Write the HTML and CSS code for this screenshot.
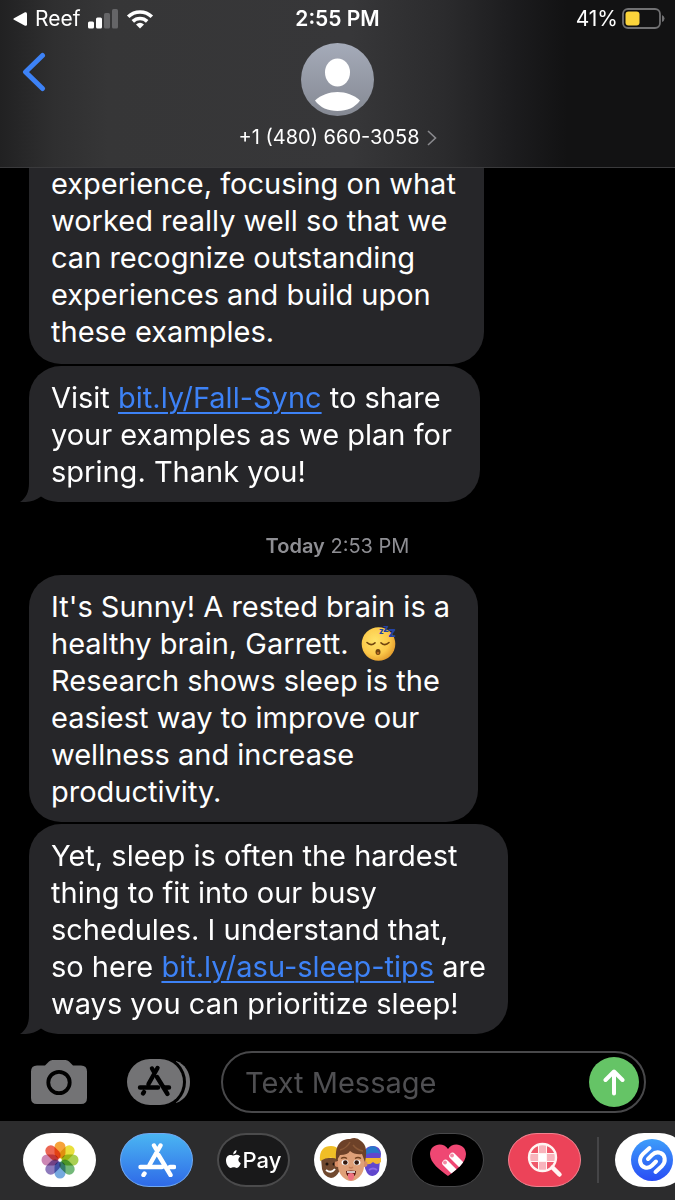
FILE: index.html
```html
<!DOCTYPE html>
<html lang="en">
<head>
<meta charset="utf-8">
<meta name="viewport" content="width=device-width, initial-scale=1">
<title>Messages</title>
<link rel="stylesheet" href="styles.css">
</head>
<body>
<header class="header">
  <div class="status">
    <div class="status-left">
      <a class="return-app" href="#reef">
        <svg width="14" height="14" viewBox="0 0 14 14" aria-hidden="true"><path d="M1 6.200 12 .3Q14 -.3 14 1.700V12.300Q14 14.300 12 13.700L1 7.800Q-.3 7 1 6.200Z" fill="#fff"/></svg>
        <span>Reef</span>
      </a>
      <svg width="30" height="20" viewBox="0 0 30 20" aria-label="Signal"><g fill="#fff"><rect x="0" y="12.500" width="6" height="7" rx="1.500"/><rect x="8" y="8.500" width="6" height="11" rx="1.500"/></g><g fill="#656567"><rect x="16" y="4" width="6" height="15.500" rx="1.500"/><rect x="24" y="0" width="6" height="19.500" rx="1.500"/></g></svg>
      <svg width="28" height="20" viewBox="0 0 28 20" aria-label="Wi-Fi"><g fill="none" stroke="#fff" stroke-width="3.600"><path d="M2.200 7.800A17 17 0 0 1 25.800 7.800"/><path d="M6.800 12.400A10.500 10.500 0 0 1 21.200 12.400"/></g><path d="M10 15.500Q14 12.200 18 15.500L14 19.500Z" fill="#fff"/></svg>
    </div>
    <div class="status-time">2:55 PM</div>
    <div class="status-right">
      <span>41%</span>
      <svg width="43" height="22" viewBox="0 0 43 22" aria-label="Battery"><rect x="1" y="1" width="37" height="19" rx="5" fill="none" stroke="#717173" stroke-width="1.800"/><rect x="3.500" y="3.500" width="14" height="14" rx="3" fill="#fbd43b"/><path d="M40 7Q42.500 8 42.500 10.500T40 14Z" fill="#717173"/></svg>
    </div>
  </div>
  <div class="nav">
    <button class="back" type="button" aria-label="Back"><svg width="24" height="40" viewBox="0 0 24 40"><path d="M20.500 3.500 3.500 20 20.500 36.500" fill="none" stroke="#3d82f6" stroke-width="5" stroke-linecap="round" stroke-linejoin="round"/></svg></button>
    <button class="contact" type="button">
      <svg width="73" height="73" viewBox="0 0 73 73" aria-hidden="true"><defs><linearGradient id="av" x1="0" y1="0" x2="0" y2="1"><stop offset="0" stop-color="#a5abb9"/><stop offset="1" stop-color="#858993"/></linearGradient></defs><circle cx="36.500" cy="36.500" r="36.500" fill="url(#av)"/><ellipse cx="36.500" cy="29.500" rx="12.500" ry="14" fill="#fff"/><path d="M14 57.500C20 52 28 49 36.500 49S53 52 59 57.500C54 64.500 46 68 36.500 68S19 64.500 14 57.500Z" fill="#fff"/></svg>
      <span class="number">+1 (480) 660-3058<svg width="10" height="16" viewBox="0 0 10 16" aria-hidden="true"><path d="M1 1 8.500 8 1 15" fill="none" stroke="#8a8a8e" stroke-width="1.600"/></svg></span>
    </button>
  </div>
</header>

<main class="thread">
  <p class="bubble continued">experience, focusing on what<br>worked really well so that we<br>can recognize outstanding<br>experiences and build upon<br>these examples.</p>
  <p class="bubble tailed">Visit <a href="#fall-sync">bit.ly/Fall-Sync</a> to share<br>your examples as we plan for<br>spring. Thank you!<svg class="tail" width="44" height="36" viewBox="0 0 44 36" aria-hidden="true"><path d="M9 0V17C9 26 6 32 0 36C8 36.500 15 35 21 30.500Q27 35 38 36H44V0Z"/></svg></p>
  <p class="stamp"><b>Today</b> 2:53 PM</p>
  <p class="bubble">It's Sunny! A rested brain is a<br>healthy brain, Garrett. <svg class="emoji" width="36" height="36" viewBox="0 0 36 36" role="img" aria-label="Sleeping face"><defs><radialGradient id="em" cx=".4" cy=".4" r=".65"><stop offset="0" stop-color="#ffe36a"/><stop offset=".65" stop-color="#fcc949"/><stop offset="1" stop-color="#e29a2c"/></radialGradient></defs><circle cx="17.500" cy="19" r="16.800" fill="url(#em)"/><g fill="none" stroke="#70450f" stroke-width="1.600" stroke-linecap="round"><path d="M6 17.500Q10 21.500 14 17.800M20 17.800Q24 21.500 28 17.500"/></g><ellipse cx="17" cy="27" rx="2.500" ry="3" fill="#70450f"/><ellipse cx="17" cy="28" rx="1.300" ry="1.200" fill="#b66c25"/><g class="zs"><text x="18" y="9" font-size="8">z</text><text x="22" y="7" font-size="10">z</text><text x="27" y="12" font-size="14">z</text></g></svg><br>Research shows sleep is the<br>easiest way to improve our<br>wellness and increase<br>productivity.</p>
  <p class="bubble tailed wide">Yet, sleep is often the hardest<br>thing to fit into our busy<br>schedules. I understand that,<br>so here <a href="#sleep-tips">bit.ly/asu-sleep-tips</a> are<br>ways you can prioritize sleep!<svg class="tail" width="44" height="36" viewBox="0 0 44 36" aria-hidden="true"><path d="M9 0V17C9 26 6 32 0 36C8 36.500 15 35 21 30.500Q27 35 38 36H44V0Z"/></svg></p>
</main>

<form class="composer">
  <button class="tool" type="button" aria-label="Camera"><svg width="56" height="44" viewBox="0 0 56 44"><path d="M6 5.500H14L18 1.500Q19.500 0 21.500 0H34.500Q36.500 0 38 1.500L42 5.500H50Q56 5.500 56 11.500V38Q56 44 50 44H6Q0 44 0 38V11.500Q0 5.500 6 5.500Z" fill="#737375"/><circle cx="28" cy="22.500" r="10.700" fill="none" stroke="#000" stroke-width="3.800"/></svg></button>
  <button class="tool" type="button" aria-label="Apps"><svg width="63" height="46" viewBox="0 0 63 46"><path d="M49 2C58 5 63 13 63 23S58 41 49 44Z" fill="#737375"/><rect x="-3" y="-3" width="62" height="52" rx="26" fill="#000"/><rect width="56" height="46" rx="23" fill="#737375"/><g fill="none" stroke="#000" stroke-width="4.400" stroke-linecap="round"><path d="M25 9.500 27 13M30.500 9 21.500 25M16 34.500 17 33M13 28.500H31M38 28.500H42M30 18 40.500 35"/></g></svg></button>
  <div class="field">
    <input type="text" placeholder="Text Message" aria-label="Text Message">
    <button class="send" type="submit" aria-label="Send"><svg width="22" height="27" viewBox="0 0 22 27"><path d="M11 24.500V3M2.500 11 11 2.500 19.500 11" fill="none" stroke="#fff" stroke-width="4" stroke-linecap="round" stroke-linejoin="round"/></svg></button>
  </div>
</form>

<nav class="apps" aria-label="iMessage apps">
  <button class="app white" type="button" aria-label="Photos"><svg width="38" height="38" viewBox="-19 -19 38 38"><g class="petals"><rect x="-5.500" y="-18.500" width="11" height="17" rx="5.500" fill="#f6a33a"/><rect x="-5.500" y="-18.500" width="11" height="17" rx="5.500" fill="#e9df3c" transform="rotate(45)"/><rect x="-5.500" y="-18.500" width="11" height="17" rx="5.500" fill="#a9cf52" transform="rotate(90)"/><rect x="-5.500" y="-18.500" width="11" height="17" rx="5.500" fill="#73b879" transform="rotate(135)"/><rect x="-5.500" y="-18.500" width="11" height="17" rx="5.500" fill="#75a9df" transform="rotate(180)"/><rect x="-5.500" y="-18.500" width="11" height="17" rx="5.500" fill="#8d7abc" transform="rotate(225)"/><rect x="-5.500" y="-18.500" width="11" height="17" rx="5.500" fill="#cc87b4" transform="rotate(270)"/><rect x="-5.500" y="-18.500" width="11" height="17" rx="5.500" fill="#ec6653" transform="rotate(315)"/></g><circle r="1.500" fill="#fff"/></svg></button>
  <button class="app store" type="button" aria-label="App Store"><svg width="38" height="34" viewBox="0 0 38 34"><g fill="none" stroke="#fff" stroke-width="4.400" stroke-linecap="round"><path d="M16 2.500 18 6M22.500 2.500 11.500 22M6.500 30.500 5.500 32M2.500 24H24M32 24H36M20.500 12 32.500 32"/></g></svg></button>
  <button class="app pay" type="button" aria-label="Apple Pay"><svg width="15" height="19" viewBox="0 0 15 19" aria-hidden="true"><path d="M10.500 0Q10.800 3.500 7.300 4.500Q7 1.300 10.500 0ZM7.500 5.500C8.700 5.500 9.500 4.800 11 4.800Q13.200 4.900 14.300 6.600C11.500 8.500 11.900 12 14.800 13.200C14 15.500 12.500 18 10.800 18C9.600 18 9 17.300 7.700 17.300S5.800 18 4.700 18C2.500 18 0 14 0 10.500C0 7 2 4.900 4.300 4.900C5.600 4.900 6.600 5.500 7.500 5.500Z" fill="#fff"/></svg><span>Pay</span></button>
  <button class="app white" type="button" aria-label="Memoji"><svg width="64" height="48" viewBox="0 0 64 48">
    <path d="M2 22H21V34Q17 42 12 42Q5 41 3 33Z" fill="#71492f"/><path d="M1 25C0 14 5 10 12 10S20 14 20 20V24Q11 19 1 25Z" fill="#f0be26"/><circle cx="8" cy="28" r="1.500" fill="#1b110c"/><circle cx="15" cy="28" r="1.500" fill="#1b110c"/><path d="M7 34Q12 38 16 33" fill="none" stroke="#fff" stroke-width="2"/>
    <path d="M45 23C43 14 48 10 54 10S64 15 61 24L60 35Q56 42 50 39Q45 35 45 23Z" fill="#6147cd"/><path d="M46 16Q50 8 57 11L62 18Q54 15 46 19Z" fill="#2778c9"/><path d="M45 22H62V26Q58 30 54 26Q50 30 46 27Z" fill="#f2b632"/><path d="M50 34Q54 31 58 34" fill="none" stroke="#8b69e8" stroke-width="2"/>
    <circle cx="18.500" cy="28" r="3" fill="#d98e66"/><circle cx="45.500" cy="28" r="3" fill="#d98e66"/><path d="M19 19Q19 8 32 8T45 19V30C45 38 38 45 32 45S19 38 19 30Z" fill="#dfa078"/><path d="M17.500 26C15 10 21 3 31 3Q37 0 42 5C48 9 48 17 46 26Q44 21 43 18Q36 19 31 15Q29 19 21 19Q19 22 17.500 26Z" fill="#6d4128"/><path d="M21 14Q28 12 31 6M34 9Q38 14 44 15" stroke="#8a5837" stroke-width="1.500" fill="none"/>
    <ellipse cx="26" cy="26.500" rx="3.400" ry="2.800" fill="#fff"/><ellipse cx="38" cy="26.500" rx="3.400" ry="2.800" fill="#fff"/><circle cx="26.300" cy="26.500" r="2.300" fill="#35190e"/><circle cx="37.700" cy="26.500" r="2.300" fill="#35190e"/><path d="M22 22.500Q25 20.500 28 22.500M36 22.500Q39 20.500 42 22.500" stroke="#70401f" stroke-width="1.400" fill="none"/><path d="M30 31Q32 33 34 31" stroke="#c67e59" stroke-width="1.300" fill="none"/><path d="M27 35Q32 34 37 35Q37 41 32 41T27 35Z" fill="#5a1510"/><path d="M28 36H36" stroke="#fff" stroke-width="1.500"/><path d="M29 38Q32 36 35 38V42Q32 47 29 42Z" fill="#ee7180"/></svg></button>
  <button class="app black" type="button" aria-label="Digital Touch"><svg width="38" height="34" viewBox="0 0 38 34"><defs><clipPath id="ht"><path d="M19 33C11 27 1 20 1 11C1 1 14-2 19 6C24-2 37 1 37 11C37 20 27 27 19 33Z"/></clipPath></defs><g clip-path="url(#ht)"><path d="M0 0H38V34H0Z" fill="#ef4773"/><g stroke="#fff" stroke-width="6.500" stroke-linecap="round"><path d="M23.500 13 39 28.500M16.500 20 32.500 36"/></g><g fill="#f48aa5"><circle cx="23" cy="12.500" r="1.900"/><circle cx="16" cy="19.500" r="1.900"/></g></g></svg></button>
  <button class="app search" type="button" aria-label="Images"><svg width="36" height="36" viewBox="0 0 36 36"><circle cx="15.500" cy="15.500" r="13" fill="#f0586a"/><g fill="#f8b4bc"><path d="M11.500 3H19.500V11.500H11.500ZM3 11.500H11.500V19.500H3ZM19.500 11.500H28V19.500H19.500ZM11.500 19.500H19.500V28H11.500Z"/></g><path d="M11.500 11.500H19.500V19.500H11.500Z" fill="#fff"/><g fill="none" stroke="#fff4f2"><path d="M11.500 3V28M19.500 3V28M3 11.500H28M3 19.500H28" stroke-width="1"/><circle cx="15.500" cy="15.500" r="13.500" stroke-width="2.400"/><path d="M25.500 25.500 32.500 32.500" stroke-width="4.500" stroke-linecap="round"/></g></svg></button>
  <span class="divider"></span>
  <button class="app white" type="button" aria-label="Shazam"><svg width="42" height="42" viewBox="0 0 42 42"><defs><linearGradient id="sz" x1="0" y1="0" x2="0" y2="1"><stop offset="0" stop-color="#3d9dfa"/><stop offset="1" stop-color="#294df5"/></linearGradient></defs><circle cx="21" cy="21" r="21" fill="url(#sz)"/><g fill="none" stroke="#fff" stroke-width="4" stroke-linecap="round"><path d="M18.500 9 12 15C7 20 9 27 14 28.500C17 29.500 19.500 28 21 26.500L25 22.500"/><path d="M24.500 33 31 27C35.500 22 34 15.500 29.500 14C26 12.500 23 14 21 16L17 20"/></g></svg></button>
</nav>
</body>
</html>
```

FILE: styles.css
```css
* { box-sizing: border-box; }

body {
  margin: 0;
  height: 100vh;
  display: flex;
  flex-direction: column;
  overflow: hidden;
  background: #000;
  color: #fff;
  font-family: Inter, "Liberation Sans", sans-serif;
}

button {
  display: flex;
  align-items: center;
  justify-content: center;
  padding: 0;
  border: 0;
  background: none;
  color: inherit;
  font: inherit;
}

svg { display: block; flex: none; }

.header {
  flex: none;
  padding: 6px 10px 17px;
  border-bottom: 1px solid #3a3a3c;
  background: linear-gradient(90deg, #212122 0%, #2f2f30 8%, #363637 16%, #373739 52%, #2b2b2d 66%, #1c1c1e 76%, #121213 84%, #121213 100%);
}

.status {
  display: grid;
  grid-template-columns: 1fr auto 1fr;
  align-items: center;
  height: 25px;
  font-size: 21px;
  line-height: 25px;
}

.status-left, .status-right, .return-app { display: flex; align-items: center; gap: 8px; }
.status-left { padding-left: 3px; }
.status-right { justify-content: flex-end; gap: 4px; }
.return-app { color: #fff; text-decoration: none; }
.status-time { font-weight: 600; }

.nav {
  display: grid;
  grid-template-columns: 1fr auto 1fr;
  align-items: start;
  padding-top: 12px;
}

.back { justify-self: start; margin: 9px 0 0 12px; }
.contact { flex-direction: column; gap: 9px; }
.number { display: flex; align-items: center; gap: 7px; font-size: 20px; line-height: 25px; }

.thread {
  flex: 1 1 0;
  min-height: 0;
  overflow: hidden;
  display: flex;
  flex-direction: column;
  justify-content: flex-end;
  align-items: flex-start;
  gap: 2px;
  padding: 0 29px;
}

.bubble {
  position: relative;
  isolation: isolate;
  flex: none;
  margin: 0;
  padding: 13px 28px 12px 22px;
  border-radius: 32px;
  background: #262629;
  font-size: 29px;
  line-height: 37px;
}

.continued { padding-bottom: 14px; border-radius: 0 0 32px 32px; }
.wide { padding-right: 22px; }

.bubble a {
  color: #3d82f6;
  text-decoration-thickness: 2px;
  text-underline-offset: 4px;
}

.tailed { border-bottom-left-radius: 0; background: linear-gradient(#262629, #262629) 100% 0 / calc(100% - 32px) 100% no-repeat, linear-gradient(#262629, #262629) 0 0 / 32px calc(100% - 32px) no-repeat; }
.tail { position: absolute; z-index: -1; left: -9px; bottom: 0; fill: #262629; }

.emoji { display: inline-block; margin-left: 4px; vertical-align: -7px; overflow: visible; }
.zs { fill: #2443a5; font-weight: 800; }

.stamp {
  align-self: center;
  margin: 30px 0 14px;
  color: #8e8e93;
  font-size: 20px;
  line-height: 25px;
}

.stamp b { font-weight: 600; }

.composer {
  flex: none;
  display: flex;
  align-items: center;
  margin: 0;
  padding: 17px 29px 8px 31px;
}

.tool { margin-right: 40px; }
.tool + .tool { margin-right: 31px; }

.field {
  flex: 1;
  min-width: 0;
  display: flex;
  align-items: center;
  height: 62px;
  padding: 0 5px 0 22px;
  border: 2px solid #48484a;
  border-radius: 31px;
}

.field input {
  flex: 1;
  min-width: 0;
  padding: 0;
  border: 0;
  outline: 0;
  background: none;
  color: #fff;
  font: inherit;
  font-size: 29px;
}

.field input::placeholder { color: #4f4f52; opacity: 1; }

.send { width: 50px; height: 50px; border-radius: 50%; background: #65c466; }

.apps {
  flex: none;
  display: flex;
  align-items: center;
  gap: 24px;
  height: 79px;
  padding: 0 0 2px 23px;
  background: #2c2c2d;
  overflow: hidden;
}

.app { flex: none; width: 73px; height: 54px; border-radius: 29px / 27px; }
.white { background: #fff; }
.store { border: 1px solid #70a9f2; background: linear-gradient(#4ab5f2, #2f6ae8); }
.pay { gap: 2px; border: 2px solid #4b4b4c; background: #19191a; font-size: 22px; font-weight: 500; }
.black { border: 1px solid #48484a; background: #000; }
.search { border: 1px solid #f2808e; background: #ec4359; }
.divider { flex: none; width: 2px; height: 46px; margin: 0 -8px; background: #454547; }
.petals rect { mix-blend-mode: multiply; }
```
